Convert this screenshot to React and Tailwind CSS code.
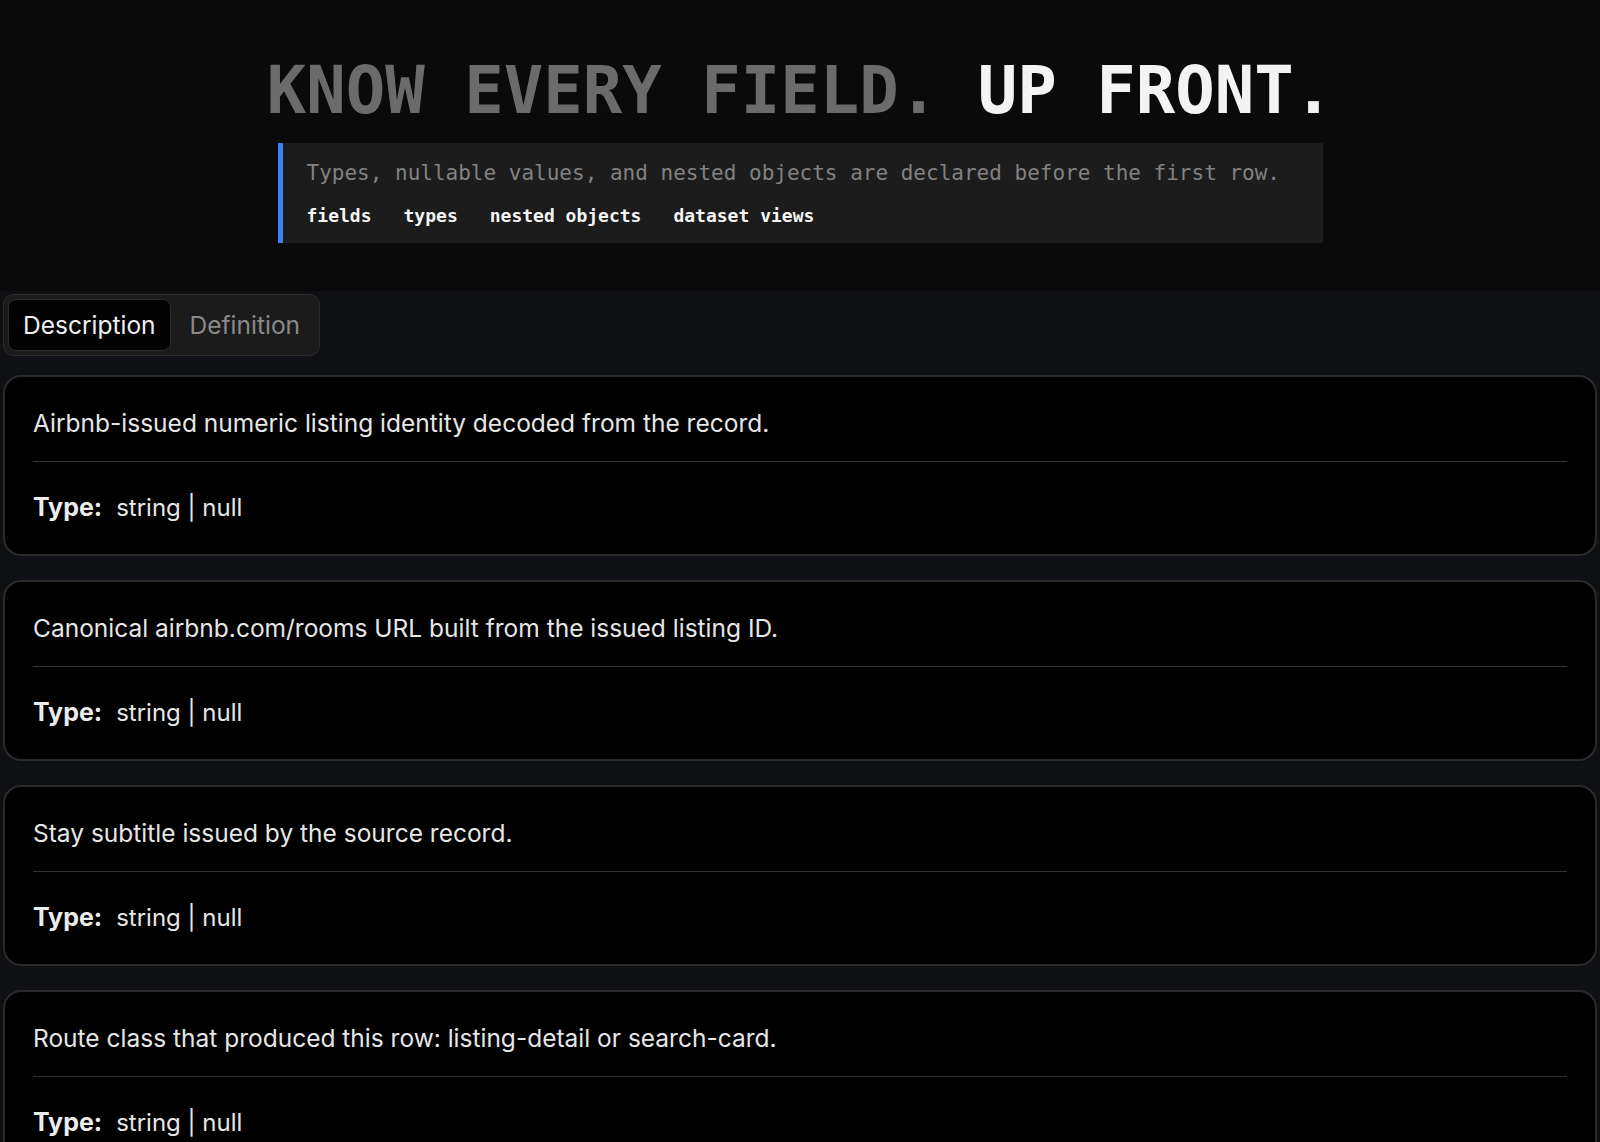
import { useState } from 'react'

const MONO = { fontFamily: '"DejaVu Sans Mono", "Liberation Mono", monospace' }

const TAGS = ['fields', 'types', 'nested objects', 'dataset views']

const FIELDS = [
  { description: 'Airbnb-issued numeric listing identity decoded from the record.', type: 'string | null' },
  { description: 'Canonical airbnb.com/rooms URL built from the issued listing ID.', type: 'string | null' },
  { description: 'Stay subtitle issued by the source record.', type: 'string | null' },
  { description: 'Route class that produced this row: listing-detail or search-card.', type: 'string | null' },
  { description: 'Listing title as displayed on the public page.', type: 'string | null' },
  { description: 'Nightly price shown to the guest, including currency.', type: 'string | null' },
]

function FieldCard({ field }) {
  return (
    <div className="rounded-[18px] border-2 border-[#2a2a2a] bg-black px-7 pt-7 pb-[28px] text-[#e6e6e6]">
      <p className="border-b border-[#333333] pb-5 text-[24.5px] leading-[36px]">{field.description}</p>
      <div className="flex items-baseline pt-[27px] leading-[36px]">
        <span className="text-[25px] font-bold text-[#ececec]">Type:</span>
        <span className="ml-[14px] text-[24px]">{field.type}</span>
      </div>
    </div>
  )
}

export default function App() {
  const [tab, setTab] = useState('description')

  return (
    <div className="min-h-screen bg-[#0e1013]" style={{ fontFamily: 'Inter, "Noto Sans", sans-serif' }}>
      {/* Hero */}
      <header className="bg-[#0a0a0a] pt-[57px] pb-[48px]">
        <h1 className="text-center text-[65.6px] leading-[66px] font-bold whitespace-nowrap" style={MONO}>
          <span className="text-[#6b6b6b]">KNOW EVERY FIELD.</span>{' '}
          <span className="text-[#f3f3f3]">UP FRONT.</span>
        </h1>
        <div className="mx-auto mt-[20px] w-[1045px] border-l-[5px] border-[#3b82f6] bg-[#1c1c1c] pt-[14px] pb-[14px] pl-[24px]" style={MONO}>
          <p className="text-[21px] leading-[32px] text-[#828282]">
            Types, nullable values, and nested objects are declared before the first row.
          </p>
          <div className="mt-[13px] flex gap-8 text-[18px] leading-[27px] font-bold text-[#f5f5f5]">
            {TAGS.map((t) => (
              <span key={t}>{t}</span>
            ))}
          </div>
        </div>
      </header>

      {/* Schema */}
      <main className="px-[3px] pt-[3px] pb-10">
        <div className="inline-flex gap-1 rounded-[10px] border border-[#2a2a2a] bg-[#1b1b1b] p-1">
          <button
            type="button"
            onClick={() => setTab('description')}
            className={`rounded-lg border px-[14px] text-[24.5px] leading-[50px] ${tab === 'description' ? 'border-[#2a2a2a] bg-[#030303] text-[#efefef]' : 'border-transparent text-[#8a8a8a]'}`}
          >
            Description
          </button>
          <button
            type="button"
            onClick={() => setTab('definition')}
            className={`rounded-lg border px-[14px] text-[24.5px] leading-[50px] ${tab === 'definition' ? 'border-[#2a2a2a] bg-[#030303] text-[#efefef]' : 'border-transparent text-[#8a8a8a]'}`}
          >
            Definition
          </button>
        </div>

        <div className="mt-[19px] flex flex-col gap-6">
          {FIELDS.map((f, i) => (
            <FieldCard key={i} field={f} />
          ))}
        </div>
      </main>
    </div>
  )
}
